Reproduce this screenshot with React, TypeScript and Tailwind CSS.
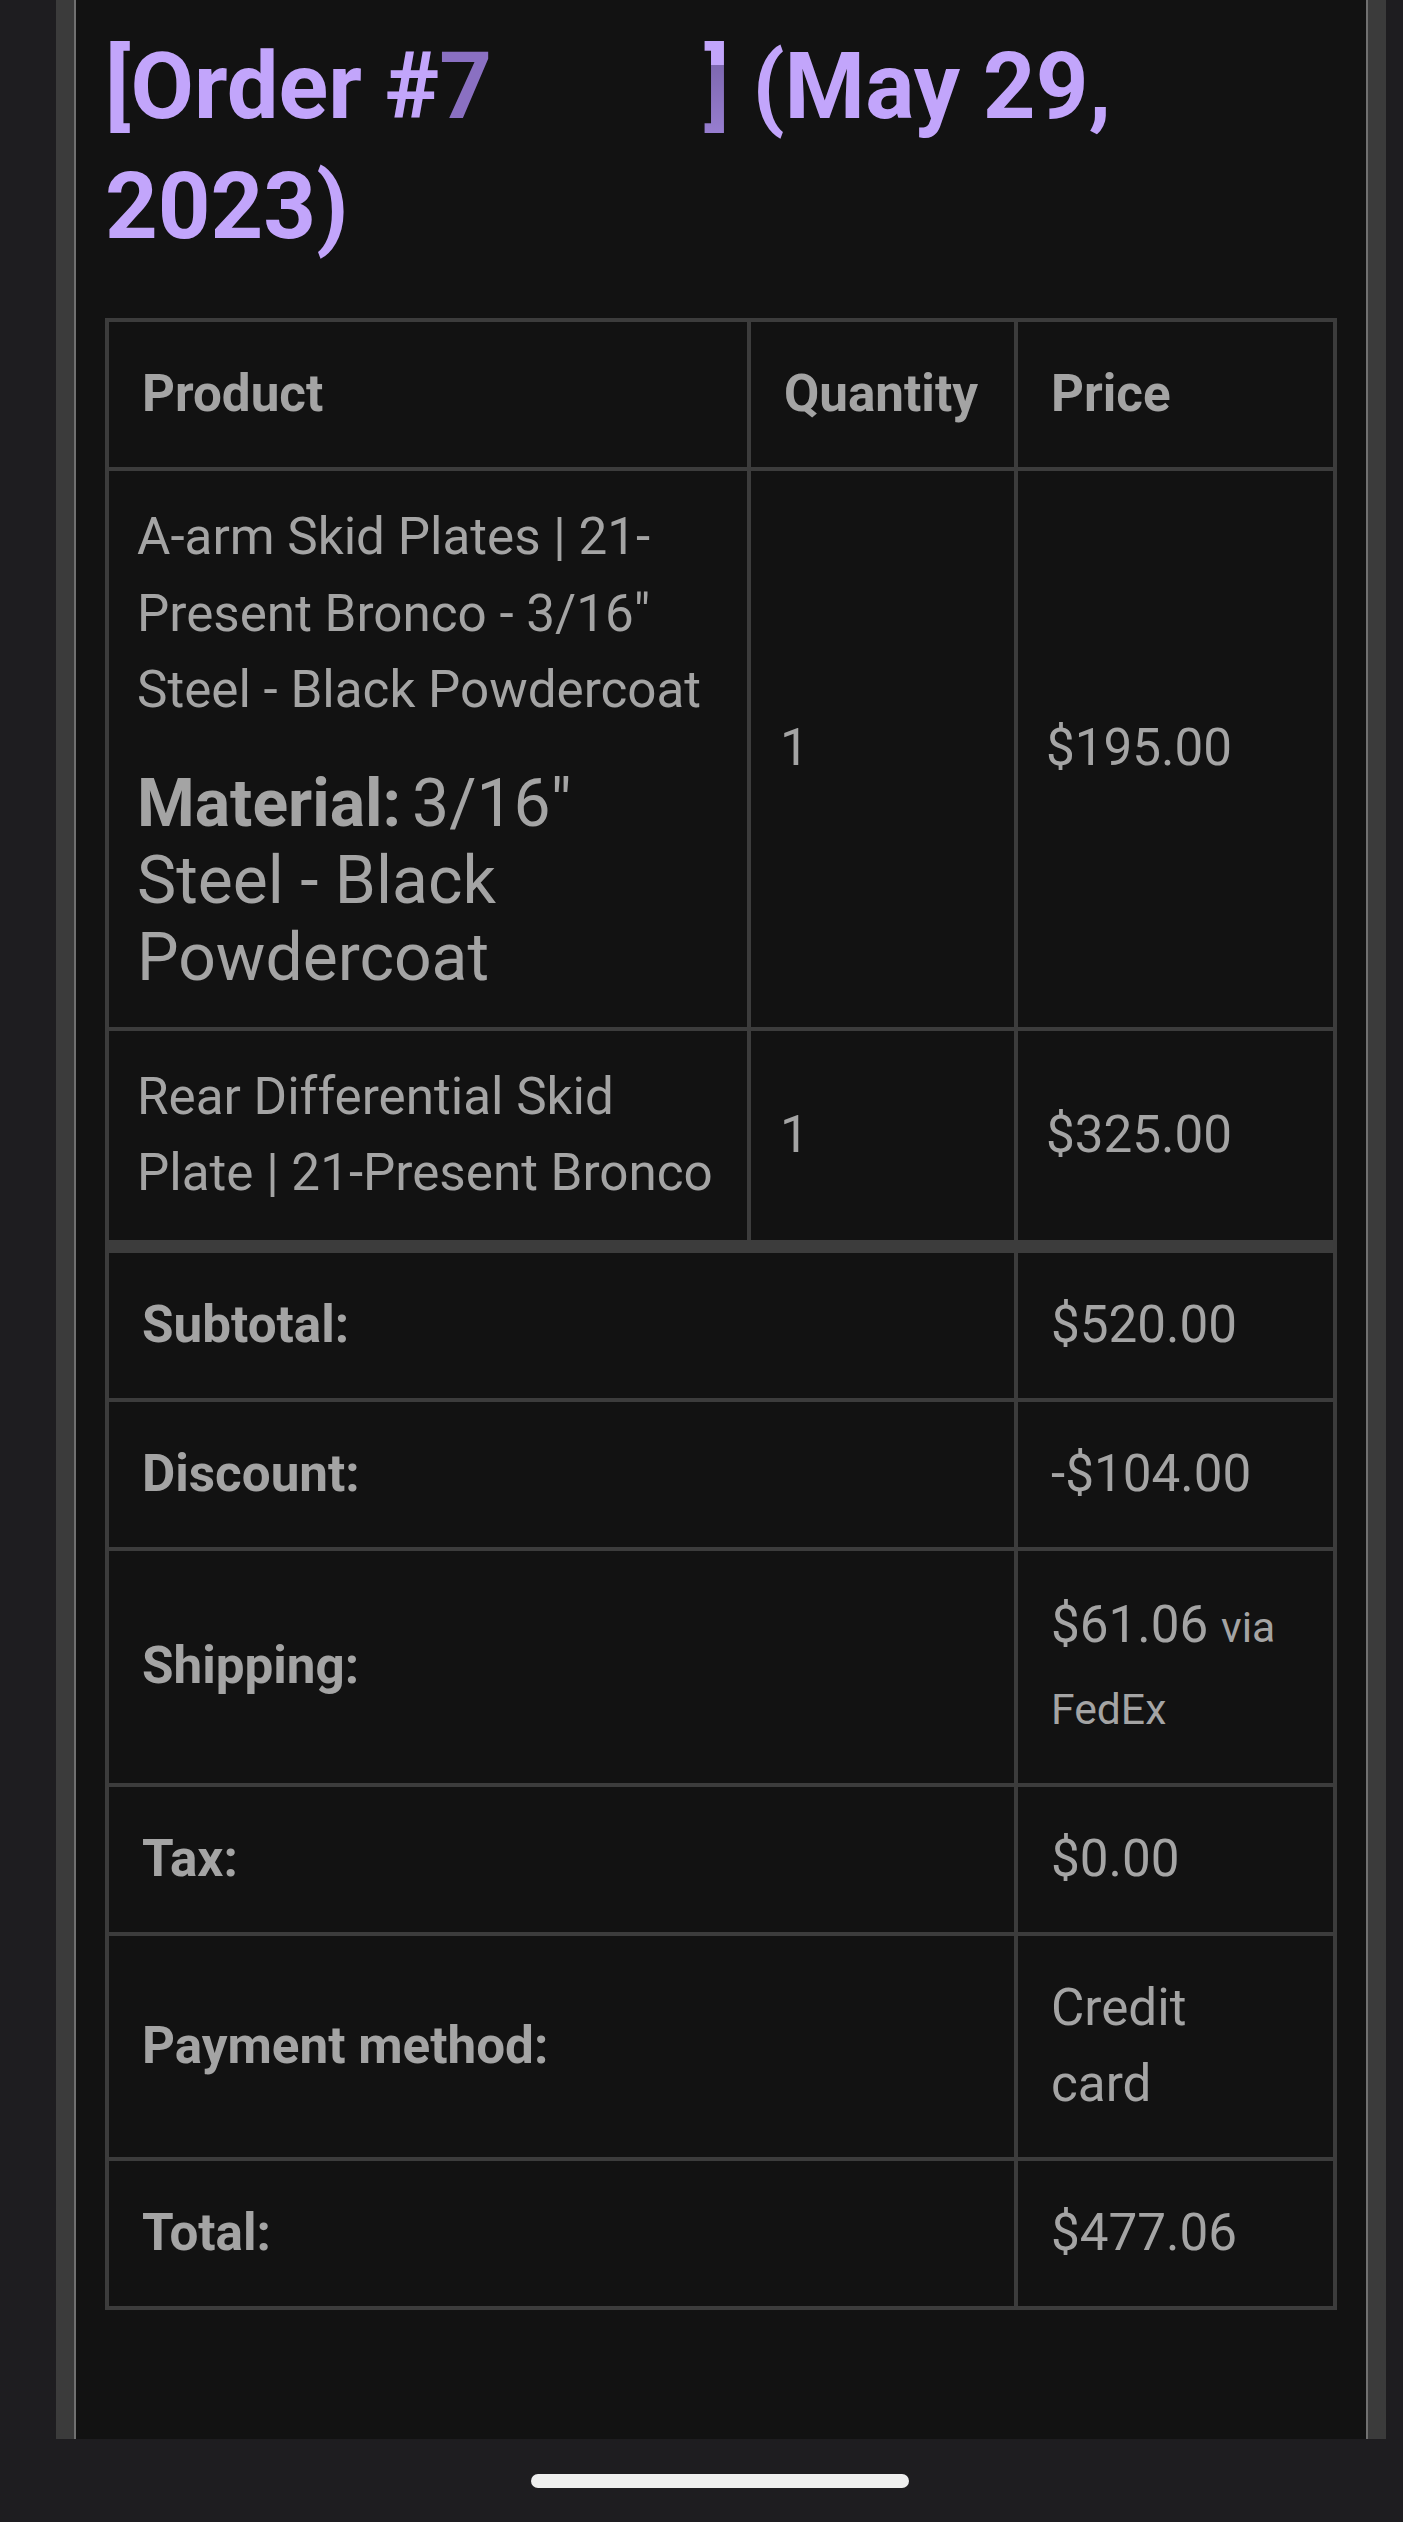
import React from "react";

const cell = "border-r-4 border-b-4 border-[#3c3c3c]";

function FootRow({
  label,
  children,
  first,
  tall,
}: {
  label: string;
  children: React.ReactNode;
  first?: boolean;
  tall?: boolean;
}) {
  return (
    <div className="grid grid-cols-[909px_319px]">
      <div
        className={
          (first ? "border-t-[9px] " : "") +
          "border-r-4 border-b-4 border-[#3c3c3c] px-[33px] py-[34px] font-bold flex items-center"
        }
      >
        {label}
      </div>
      <div
        className={
          (first ? "border-t-[9px] " : "") +
          "border-r-4 border-b-4 border-[#3c3c3c] px-[33px] py-[34px] flex flex-col justify-center"
        }
      >
        <div className={tall ? "leading-[79px]" : ""}>{children}</div>
      </div>
    </div>
  );
}

export default function App() {
  return (
    <div className="w-[1403px] h-[2522px] bg-[#1e1d20] flex flex-col [font-family:Roboto,'Liberation_Sans',sans-serif]">
      <div className="h-[2439px] ml-[56px] w-[1330px] border-x-[18px] border-[#3b3b3b] flex">
        <div className="flex-1 border-x-2 border-[#707070] bg-[#121212] px-[29px]">
          <h2 className="mt-[27px] text-[92px] leading-[120px] font-bold text-[#c2a5fb]">
            [Order #<span className="text-[#8a70c2]">7</span>
            <span className="inline-block w-[212px]"></span>
            <span className="bg-[linear-gradient(to_bottom,#c2a5fb_0%,#c2a5fb_30%,#7e68b1_30%,#9a80d3_100%)] bg-clip-text text-transparent">
              ]
            </span>{" "}
            (May 29, 2023)
          </h2>

          <div className="mt-[51px] border-l-4 border-t-4 border-[#3c3c3c] text-[51.2px] leading-[76.8px] text-[#a4a4a4]">
            <div className="grid grid-cols-[642px_267px_319px]">
              <div className={cell + " px-[33px] py-[34px] font-bold"}>Product</div>
              <div className={cell + " px-[33px] py-[34px] font-bold"}>Quantity</div>
              <div className={cell + " px-[33px] py-[34px] font-bold"}>Price</div>
            </div>

            <div className="grid grid-cols-[642px_267px_319px]">
              <div className={cell + " p-[28px] whitespace-nowrap"}>
                <div>
                  A-arm Skid Plates | 21-
                  <br />
                  Present Bronco - 3/16"
                  <br />
                  Steel - Black Powdercoat
                </div>
                <div className="mt-[37px] mb-[2px] text-[66px] leading-[76.8px]">
                  <strong className="font-bold">Material:</strong>
                  <span className="ml-[11px]">3/16"</span>
                  <br />
                  Steel - Black
                  <br />
                  Powdercoat
                </div>
              </div>
              <div className={cell + " px-[29px] flex items-center"}>1</div>
              <div className={cell + " px-[28px] flex items-center"}>$195.00</div>
            </div>

            <div className="grid grid-cols-[642px_267px_319px]">
              <div className={cell + " p-[28px] whitespace-nowrap"}>
                Rear Differential Skid
                <br />
                Plate | 21-Present Bronco
              </div>
              <div className={cell + " px-[29px] flex items-center"}>1</div>
              <div className={cell + " px-[28px] flex items-center"}>$325.00</div>
            </div>

            <FootRow label="Subtotal:" first>
              $520.00
            </FootRow>
            <FootRow label="Discount:">-$104.00</FootRow>
            <FootRow label="Shipping:" tall>
              $61.06 <small className="text-[42.7px]">via FedEx</small>
            </FootRow>
            <FootRow label="Tax:">$0.00</FootRow>
            <FootRow label="Payment method:">
              Credit
              <br />
              card
            </FootRow>
            <FootRow label="Total:">$477.06</FootRow>
          </div>
        </div>
      </div>
      <div className="flex-1">
        <div className="ml-[531px] mt-[35px] w-[378px] h-[14px] rounded-full bg-[#efefef]"></div>
      </div>
    </div>
  );
}
